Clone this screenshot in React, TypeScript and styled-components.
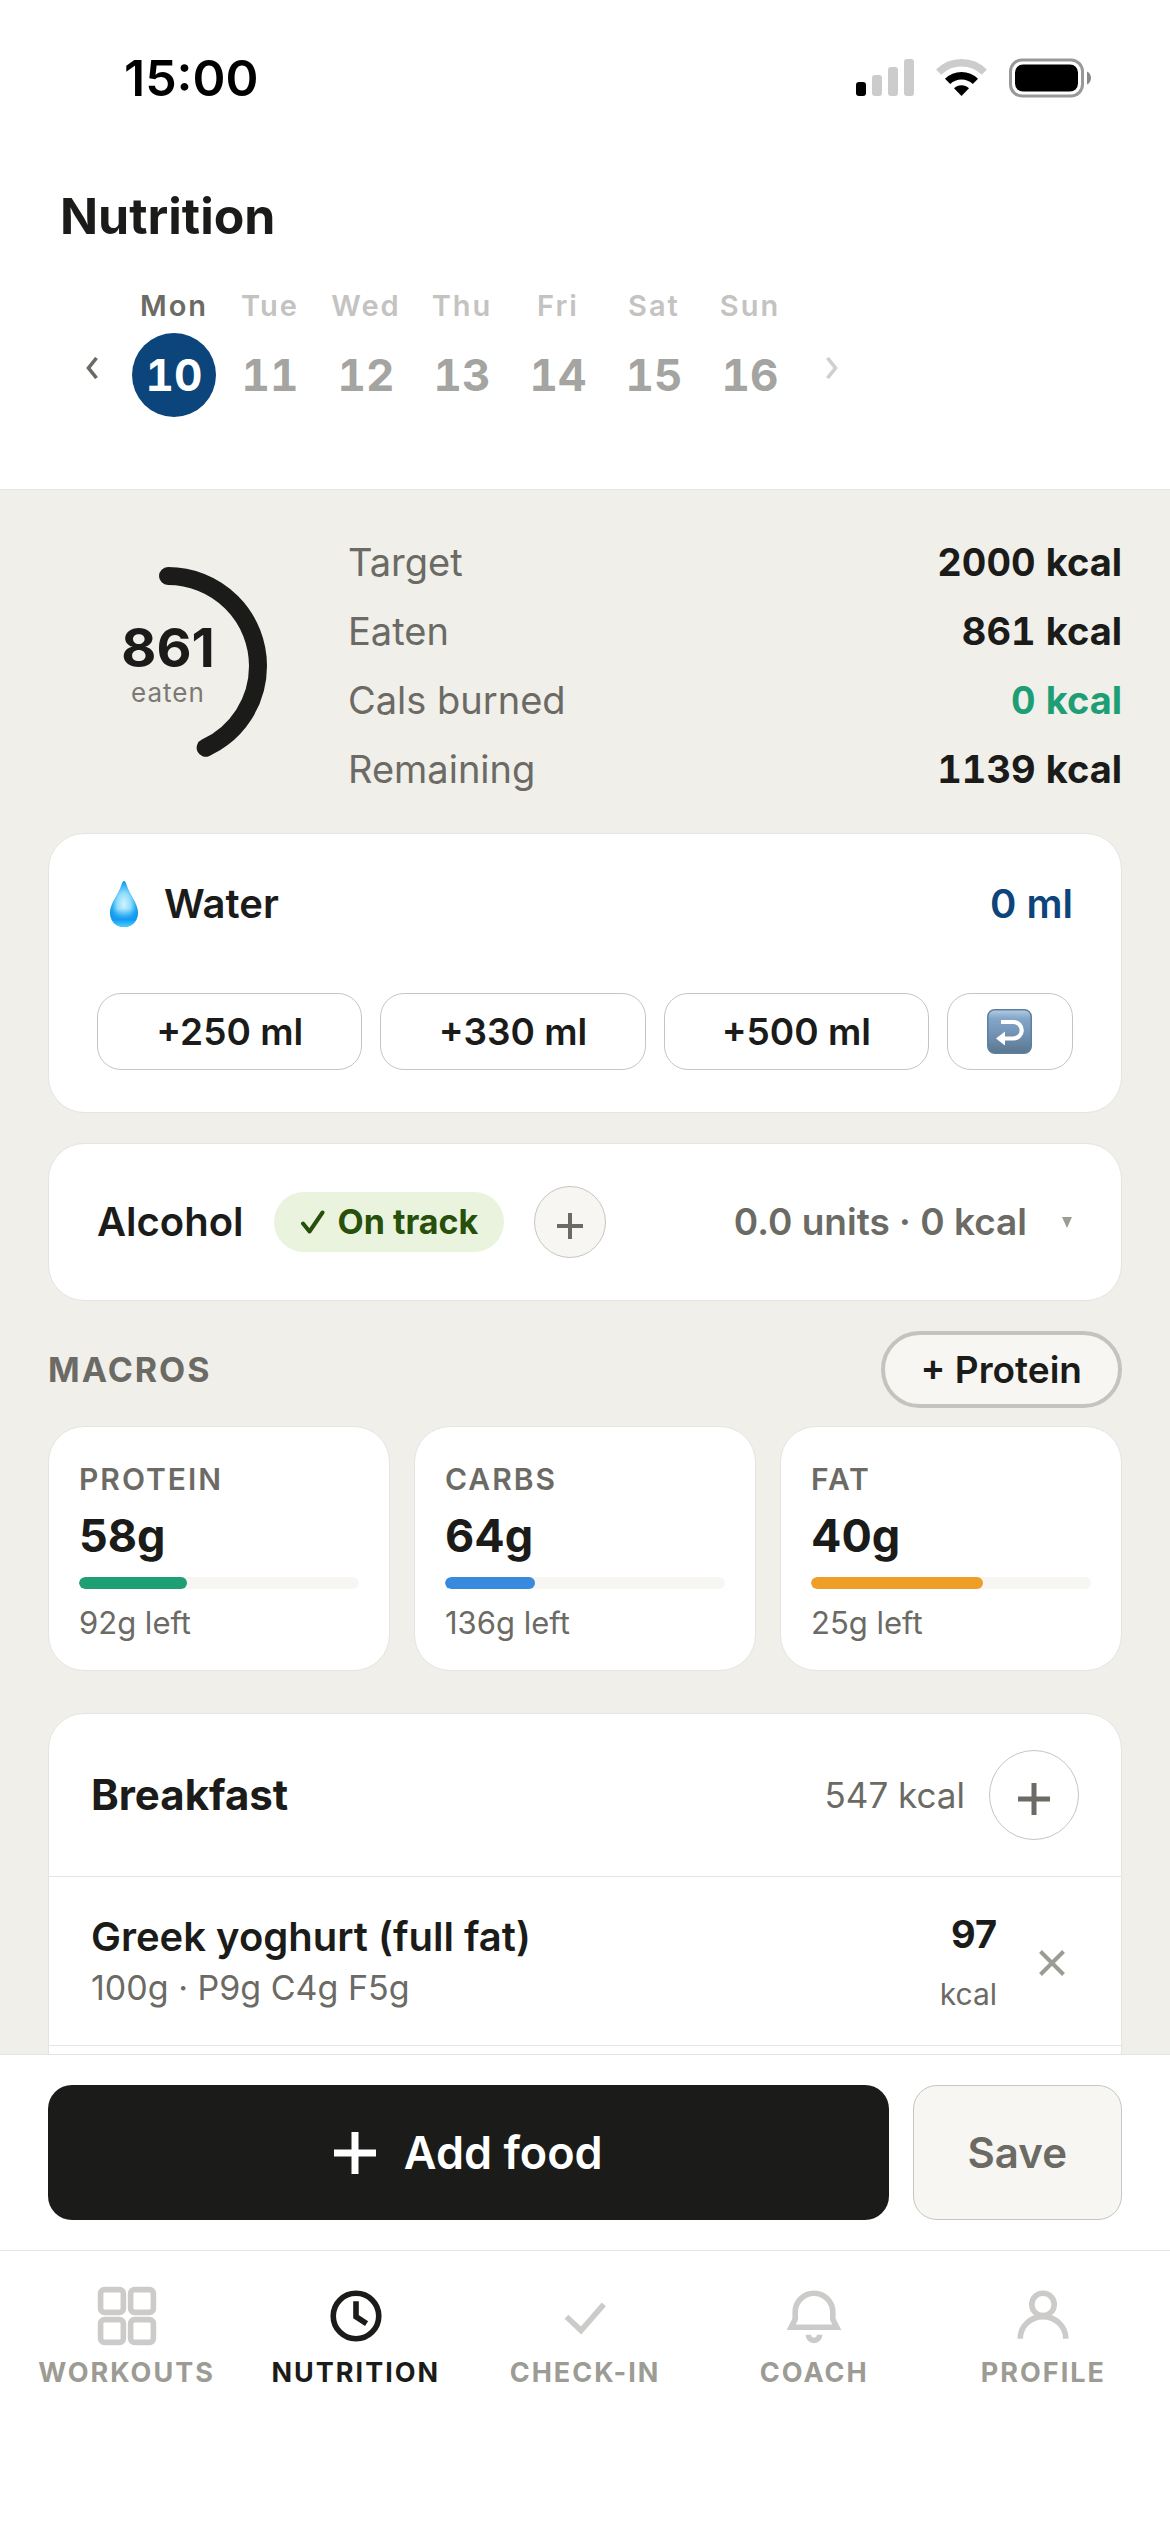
import React from "react";
import styled, { createGlobalStyle } from "styled-components";

const ink = "#1b1b19";
const muted = "#6b6a64";
const faint = "#9c9b94";
const line = "#e4e4e2";
const edge = "#c6c5c2";
const soft = "#f7f6f2";
const navy = "#0c447c";
const green = "#1d9e75";

const GlobalStyle = createGlobalStyle`
  *, *::before, *::after { box-sizing: border-box; }
  body { margin: 0; background: #fff; }
  body, button { font-family: Inter, "Liberation Sans", sans-serif; color: ${ink}; }
  button { margin: 0; padding: 0; border: 0; background: none; cursor: pointer; }
  h1, h2, dl, dd, dt, p, ul { margin: 0; padding: 0; }
  svg { display: block; flex: none; }
`;

const Screen = styled.div`
  display: flex;
  flex-direction: column;
  height: 100vh;
`;

const StatusBar = styled.div`
  display: flex;
  align-items: center;
  justify-content: space-between;
  height: 156px;
  padding: 0 78px 0 124px;
  flex: none;
`;

const Clock = styled.span`
  font-size: 50px;
  line-height: 60px;
  font-weight: 600;
  color: #000;
`;

const StatusIcons = styled.div`
  display: flex;
  align-items: center;
  gap: 22px;
`;

const Header = styled.header`
  flex: none;
  padding: 30px 60px 72px;
  border-bottom: 1px solid ${line};
`;

const Title = styled.h1`
  font-size: 50px;
  line-height: 60px;
  font-weight: 700;
`;

const Week = styled.div`
  display: flex;
  align-items: center;
  gap: 12px;
  margin: 42px 0 0 4px;
`;

const WeekArrow = styled.button<{ $dim?: boolean }>`
  display: flex;
  justify-content: center;
  width: 56px;
  padding-top: 30px;
  color: ${(p) => (p.$dim ? "#cfcfcd" : muted)};
`;

const Day = styled.button<{ $active?: boolean }>`
  display: flex;
  flex-direction: column;
  align-items: center;
  gap: 9px;
  width: 84px;
  font-size: 29px;
  line-height: 36px;
  font-weight: 600;
  letter-spacing: 2px;
  color: ${(p) => (p.$active ? muted : "#c4c3c1")};
`;

const DayNumber = styled.span<{ $active?: boolean }>`
  display: flex;
  align-items: center;
  justify-content: center;
  width: 84px;
  height: 84px;
  border-radius: 50%;
  font-size: 44px;
  font-weight: 700;
  font-variant-numeric: tabular-nums;
  letter-spacing: 0;
  background: ${(p) => (p.$active ? navy : "transparent")};
  color: ${(p) => (p.$active ? "#fff" : "#a4a4a2")};
`;

const Main = styled.main`
  flex: 1;
  min-height: 0;
  overflow-y: auto;
  scrollbar-width: none;
  padding: 48px 48px 0;
  background: #f0efea;
`;

const Summary = styled.section`
  display: flex;
  align-items: center;
  gap: 60px;
  margin-bottom: 40px;
`;

const Ring = styled.div`
  display: grid;
  place-items: center;
  width: 240px;
  flex: none;
  > * { grid-area: 1 / 1; }
`;

const RingText = styled.div`
  display: flex;
  flex-direction: column;
  align-items: center;
`;

const RingValue = styled.strong`
  font-size: 54px;
  line-height: 54px;
  font-weight: 700;
`;

const RingLabel = styled.span`
  font-size: 26px;
  line-height: 36px;
  letter-spacing: 1px;
  color: #7a7973;
`;

const Stats = styled.dl`
  display: flex;
  flex-direction: column;
  flex: 1;
  gap: 21px;
`;

const Stat = styled.div`
  display: flex;
  justify-content: space-between;
  font-size: 38px;
  line-height: 48px;
`;

const StatName = styled.dt`
  color: ${muted};
`;

const StatValue = styled.dd<{ $color?: string }>`
  font-weight: 700;
  font-variant-numeric: tabular-nums;
  color: ${(p) => p.$color ?? ink};
`;

const Card = styled.section`
  background: #fff;
  border: 1px solid ${line};
  border-radius: 36px;
`;

const WaterCard = styled(Card)`
  padding: 42px 48px;
  margin-bottom: 30px;
`;

const WaterHead = styled.div`
  display: flex;
  align-items: center;
  justify-content: space-between;
  height: 56px;
  margin-bottom: 61px;
`;

const CardTitle = styled.h2`
  display: flex;
  align-items: center;
  gap: 10px;
  font-size: 40px;
  line-height: 48px;
  font-weight: 600;
`;

const WaterTotal = styled.span`
  font-size: 40px;
  line-height: 48px;
  font-weight: 600;
  color: ${navy};
`;

const WaterButtons = styled.div`
  display: flex;
  gap: 18px;
`;

const WaterButton = styled.button<{ $compact?: boolean }>`
  display: flex;
  align-items: center;
  justify-content: center;
  flex: ${(p) => (p.$compact ? "0 0 126px" : "1")};
  height: 77px;
  border: 1px solid ${edge};
  border-radius: 24px;
  font-size: 37px;
  line-height: 48px;
  font-weight: 600;
`;

const AlcoholCard = styled(Card)`
  display: flex;
  align-items: center;
  padding: 42px 48px;
  margin-bottom: 30px;
`;

const Pill = styled.span`
  display: flex;
  align-items: center;
  gap: 12px;
  height: 60px;
  margin: 0 30px;
  padding: 0 26px;
  border-radius: 30px;
  background: #eaf3de;
  color: #27500a;
  font-size: 34px;
  line-height: 42px;
  font-weight: 700;
`;

const RoundButton = styled.button<{ $size: number; $fill: string }>`
  display: flex;
  align-items: center;
  justify-content: center;
  width: ${(p) => p.$size}px;
  height: ${(p) => p.$size}px;
  padding-top: 8px;
  flex: none;
  border: 1px solid ${edge};
  border-radius: 50%;
  background: ${(p) => p.$fill};
  color: ${muted};
`;

const Units = styled.button`
  display: flex;
  align-items: center;
  gap: 34px;
  margin-left: auto;
  font-size: 37px;
  line-height: 48px;
  font-weight: 600;
  color: ${muted};
`;

const MacroHead = styled.div`
  display: flex;
  align-items: center;
  justify-content: space-between;
  margin-bottom: 18px;
`;

const Eyebrow = styled.h2`
  font-size: 34px;
  line-height: 42px;
  font-weight: 700;
  letter-spacing: 2px;
  color: ${muted};
`;

const ProteinButton = styled.button`
  height: 77px;
  padding: 0 36px;
  border: 4px solid #c4c3c0;
  border-radius: 39px;
  background: ${soft};
  font-size: 37px;
  line-height: 48px;
  font-weight: 600;
`;

const Macros = styled.div`
  display: grid;
  grid-template-columns: repeat(3, 1fr);
  gap: 24px;
  margin-bottom: 42px;
`;

const MacroCard = styled(Card)`
  padding: 34px 30px 29px;
`;

const MacroName = styled.p`
  font-size: 30px;
  line-height: 36px;
  font-weight: 600;
  letter-spacing: 2px;
  color: ${muted};
`;

const MacroValue = styled.p`
  margin: 12px 0 14px;
  font-size: 45px;
  line-height: 54px;
  font-weight: 700;
`;

const Track = styled.div`
  height: 12px;
  border-radius: 6px;
  background: ${soft};
  overflow: hidden;
`;

const Fill = styled.div`
  height: 100%;
  border-radius: 6px;
`;

const MacroLeft = styled.p`
  margin-top: 16px;
  font-size: 31px;
  line-height: 36px;
  color: ${muted};
`;

const Meal = styled(Card)`
  padding-bottom: 42px;
`;

const MealHead = styled.div`
  display: flex;
  align-items: center;
  gap: 24px;
  padding: 36px 42px;
  border-bottom: 1px solid ${line};
`;

const MealTitle = styled.h2`
  flex: 1;
  font-size: 42px;
  line-height: 48px;
  font-weight: 700;
`;

const MealTotal = styled.span`
  font-size: 35px;
  line-height: 48px;
  color: ${muted};
`;

const FoodList = styled.ul`
  list-style: none;
`;

const Food = styled.li`
  display: flex;
  align-items: center;
  gap: 28px;
  padding: 33px 42px;
  border-bottom: 1px solid ${line};
`;

const FoodInfo = styled.div`
  flex: 1;
`;

const FoodName = styled.p`
  font-size: 40px;
  line-height: 48px;
  font-weight: 600;
`;

const FoodDetail = styled.p`
  margin-top: 6px;
  font-size: 34px;
  line-height: 42px;
  color: ${muted};
`;

const FoodEnergy = styled.div`
  display: flex;
  flex-direction: column;
  align-items: flex-end;
  gap: 18px;
`;

const EnergyValue = styled.strong`
  font-size: 38px;
  line-height: 48px;
  font-weight: 700;
`;

const EnergyUnit = styled.span`
  font-size: 30px;
  line-height: 36px;
  color: ${muted};
`;

const RemoveButton = styled.button`
  display: flex;
  justify-content: center;
  width: 54px;
  padding-top: 4px;
  color: ${faint};
`;

const Actions = styled.div`
  display: flex;
  gap: 24px;
  flex: none;
  padding: 30px 48px;
  border-top: 1px solid ${line};
`;

const AddButton = styled.button`
  display: flex;
  align-items: center;
  justify-content: center;
  gap: 28px;
  flex: 1;
  height: 135px;
  border-radius: 24px;
  background: ${ink};
  color: #fff;
  font-size: 45px;
  line-height: 54px;
  font-weight: 600;
`;

const SaveButton = styled.button`
  height: 135px;
  padding: 0 54px;
  border: 1px solid ${edge};
  border-radius: 24px;
  background: ${soft};
  color: ${muted};
  font-size: 42px;
  line-height: 54px;
  font-weight: 600;
`;

const Tabs = styled.nav`
  display: flex;
  flex: none;
  padding: 32px 12px 144px;
  border-top: 1px solid ${line};
`;

const Tab = styled.a<{ $active?: boolean }>`
  display: flex;
  flex-direction: column;
  align-items: center;
  gap: 9px;
  flex: 1 1 0;
  font-size: 27px;
  line-height: 30px;
  font-weight: 700;
  letter-spacing: 2px;
  text-decoration: none;
  color: ${(p) => (p.$active ? ink : faint)};
  svg { color: ${(p) => (p.$active ? ink : "#cccbc9")}; }
`;

const Plus = ({ size, weight }: { size: number; weight: number }) => (
  <svg width={size} height={size} viewBox={`0 0 ${size} ${size}`} stroke="currentColor" strokeWidth={weight} aria-hidden="true">
    <path d={`M${size / 2} 0V${size}M0 ${size / 2}H${size}`} />
  </svg>
);

const Chevron = ({ d }: { d: string }) => (
  <svg width="14" height="22" viewBox="0 0 14 22" fill="none" stroke="currentColor" strokeWidth="3.6" aria-hidden="true">
    <path d={d} />
  </svg>
);

const TabIcon = ({ children }: { children: React.ReactNode }) => (
  <svg width="66" height="66" viewBox="0 0 20 20" fill="none" stroke="currentColor" strokeWidth="1.7" aria-hidden="true">
    {children}
  </svg>
);

const Signal = () => (
  <svg width="58" height="38" viewBox="0 0 58 38" aria-label="Signal" role="img">
    <rect x="0" y="23" width="10" height="14" rx="3" fill="#000" />
    <rect x="16" y="16" width="10" height="21" rx="3" fill="#ccc" />
    <rect x="32" y="8" width="10" height="29" rx="3" fill="#ccc" />
    <rect x="48" y="0" width="10" height="37" rx="3" fill="#ccc" />
  </svg>
);

const Wifi = () => (
  <svg width="51" height="38" viewBox="0 0 51 38" fill="none" aria-label="Wi-Fi" role="img">
    <path d="M2.7 13.2a32.4 32.4 0 0 1 45.6 0" stroke="#ccc" strokeWidth="7.4" />
    <path d="M11.6 22.4a19.8 19.8 0 0 1 27.8 0" stroke="#000" strokeWidth="7.4" />
    <path d="M18 29.3a10.6 10.6 0 0 1 15 0L25.5 37z" fill="#000" />
  </svg>
);

const Battery = () => (
  <svg width="83" height="40" viewBox="0 0 83 40" aria-label="Battery" role="img">
    <rect x="1.5" y="2" width="72" height="36" rx="11.5" fill="none" stroke="#999" strokeWidth="3" />
    <rect x="6" y="6.5" width="63" height="27" rx="8" fill="#000" />
    <path d="M78 13.5c2.500 1 4 3.600 4 6.500s-1.500 5.500-4 6.500z" fill="#888" />
  </svg>
);

const Drop = () => (
  <svg width="57" height="48" viewBox="0 0 57 48" aria-hidden="true">
    <defs>
      <radialGradient id="drop" cx="0.5" cy="0.5" r="0.55">
        <stop offset="0" stopColor="#d2f4ff" />
        <stop offset="0.45" stopColor="#8fdcfb" />
        <stop offset="0.8" stopColor="#1ea6f0" />
        <stop offset="1" stopColor="#1592e0" />
      </radialGradient>
      <linearGradient id="dropBase" x1="0" y1="0" x2="0" y2="1">
        <stop offset="0.6" stopColor="#119bf2" stopOpacity="0" />
        <stop offset="0.84" stopColor="#119bf2" />
        <stop offset="1" stopColor="#4fd0fb" />
      </linearGradient>
    </defs>
    <path d="M27 1c1.500 0 2 2 3 5 2.500 8 11 17.500 11 26.500C41 41 35 47 27 47s-14-6-14-14.500C13 23.500 21.500 14 24 6c1-3 1.500-5 3-5z" fill="url(#drop)" />
    <path d="M27 1c1.500 0 2 2 3 5 2.500 8 11 17.500 11 26.500C41 41 35 47 27 47s-14-6-14-14.500C13 23.500 21.500 14 24 6c1-3 1.500-5 3-5z" fill="url(#dropBase)" />
  </svg>
);

const Undo = () => (
  <svg width="45" height="45" viewBox="0 0 45 45" aria-hidden="true">
    <defs>
      <linearGradient id="undo" x1="0" y1="0" x2="0" y2="1">
        <stop offset="0" stopColor="#b4cde3" />
        <stop offset="0.2" stopColor="#84a6c9" />
        <stop offset="0.5" stopColor="#7596b8" />
        <stop offset="1" stopColor="#5a7790" />
      </linearGradient>
    </defs>
    <rect x="0.75" y="0.75" width="43.5" height="43.5" rx="7" fill="url(#undo)" stroke="#5f7f9e" strokeWidth="1.5" />
    <path d="M14 13h12.500a8 8 0 0 1 0 16.500H17" fill="none" stroke="#fff" strokeWidth="4.2" />
    <path d="M9 29.500l9-7v14z" fill="#fff" />
  </svg>
);

const days = [
  ["Mon", 10],
  ["Tue", 11],
  ["Wed", 12],
  ["Thu", 13],
  ["Fri", 14],
  ["Sat", 15],
  ["Sun", 16],
] as const;

const stats = [
  { name: "Target", value: "2000 kcal" },
  { name: "Eaten", value: "861 kcal" },
  { name: "Cals burned", value: "0 kcal", color: green },
  { name: "Remaining", value: "1139 kcal" },
];

const macros = [
  { name: "PROTEIN", eaten: 58, goal: 150, color: green },
  { name: "CARBS", eaten: 64, goal: 200, color: "#378add" },
  { name: "FAT", eaten: 40, goal: 65, color: "#ef9f27" },
];

const tabs = [
  {
    name: "WORKOUTS",
    icon: (
      <>
        <rect x="2" y="2" width="6.9" height="6.9" rx="1.2" />
        <rect x="11.1" y="2" width="6.9" height="6.9" rx="1.2" />
        <rect x="2" y="11.1" width="6.9" height="6.9" rx="1.2" />
        <rect x="11.1" y="11.1" width="6.9" height="6.9" rx="1.2" />
      </>
    ),
  },
  {
    name: "NUTRITION",
    active: true,
    icon: (
      <>
        <circle cx="10" cy="10" r="6.9" />
        <path d="M10 5.500v4.700l3.200 2.100" />
      </>
    ),
  },
  { name: "CHECK-IN", icon: <path d="M4.400 10.200l4.400 4.200 6.900-7.900" /> },
  {
    name: "COACH",
    icon: (
      <>
        <path d="M10 3.100a5.700 5.700 0 0 0-5.700 5.700V11L3.100 13.400h13.800L15.700 11V8.800A5.700 5.700 0 0 0 10 3.100z" />
        <path d="M8.300 15.700a1.700 1.700 0 0 0 3.400 0" />
      </>
    ),
  },
  {
    name: "PROFILE",
    icon: (
      <>
        <circle cx="10" cy="6.5" r="3.4" />
        <path d="M3.100 16.900c0-3.800 3.100-6.700 6.900-6.700s6.900 2.900 6.900 6.700" />
      </>
    ),
  },
];

const ringLength = 2 * Math.PI * 90;

export default function App() {
  return (
    <Screen>
      <GlobalStyle />
      <StatusBar>
        <Clock>15:00</Clock>
        <StatusIcons>
          <Signal />
          <Wifi />
          <Battery />
        </StatusIcons>
      </StatusBar>

      <Header>
        <Title>Nutrition</Title>
        <Week>
          <WeekArrow aria-label="Previous week">
            <Chevron d="M11.500 1L3.500 11l8 10" />
          </WeekArrow>
          {days.map(([name, number]) => (
            <Day key={name} $active={number === 10}>
              {name}
              <DayNumber $active={number === 10}>{number}</DayNumber>
            </Day>
          ))}
          <WeekArrow $dim aria-label="Next week">
            <Chevron d="M2.500 1l8 10-8 10" />
          </WeekArrow>
        </Week>
      </Header>

      <Main>
        <Summary>
          <Ring>
            <svg width="240" height="240" viewBox="0 0 240 240" fill="none" aria-hidden="true">
              <circle
                cx="120"
                cy="120"
                r="90"
                stroke={ink}
                strokeWidth="18"
                strokeLinecap="round"
                strokeDasharray={`${(ringLength * 861) / 2000} ${ringLength}`}
                transform="rotate(-90 120 120)"
              />
            </svg>
            <RingText>
              <RingValue>861</RingValue>
              <RingLabel>eaten</RingLabel>
            </RingText>
          </Ring>
          <Stats>
            {stats.map((s) => (
              <Stat key={s.name}>
                <StatName>{s.name}</StatName>
                <StatValue $color={s.color}>{s.value}</StatValue>
              </Stat>
            ))}
          </Stats>
        </Summary>

        <WaterCard>
          <WaterHead>
            <CardTitle>
              <Drop />
              Water
            </CardTitle>
            <WaterTotal>0 ml</WaterTotal>
          </WaterHead>
          <WaterButtons>
            <WaterButton>+250 ml</WaterButton>
            <WaterButton>+330 ml</WaterButton>
            <WaterButton>+500 ml</WaterButton>
            <WaterButton $compact aria-label="Undo">
              <Undo />
            </WaterButton>
          </WaterButtons>
        </WaterCard>

        <AlcoholCard>
          <CardTitle>Alcohol</CardTitle>
          <Pill>
            <svg width="26" height="24" viewBox="0 0 26 24" fill="none" stroke="currentColor" strokeWidth="4" strokeLinecap="round" strokeLinejoin="round" aria-hidden="true">
              <path d="M3 13.500l6.500 8L22.500 2.500" />
            </svg>
            On track
          </Pill>
          <RoundButton $size={72} $fill={soft} aria-label="Add drink">
            <Plus size={26} weight={4} />
          </RoundButton>
          <Units aria-label="Show alcohol details">
            0.0 units · 0 kcal
            <svg width="12" height="12" viewBox="0 0 12 12" fill={faint} aria-hidden="true">
              <path d="M1 1h10L6 12z" />
            </svg>
          </Units>
        </AlcoholCard>

        <MacroHead>
          <Eyebrow>MACROS</Eyebrow>
          <ProteinButton>+ Protein</ProteinButton>
        </MacroHead>
        <Macros>
          {macros.map((m) => (
            <MacroCard key={m.name}>
              <MacroName>{m.name}</MacroName>
              <MacroValue>{m.eaten}g</MacroValue>
              <Track>
                <Fill style={{ width: `${(m.eaten / m.goal) * 100}%`, background: m.color }} />
              </Track>
              <MacroLeft>{m.goal - m.eaten}g left</MacroLeft>
            </MacroCard>
          ))}
        </Macros>

        <Meal>
          <MealHead>
            <MealTitle>Breakfast</MealTitle>
            <MealTotal>547 kcal</MealTotal>
            <RoundButton $size={90} $fill="#fff" aria-label="Add to breakfast">
              <Plus size={32} weight={5} />
            </RoundButton>
          </MealHead>
          <FoodList>
            <Food>
              <FoodInfo>
                <FoodName>Greek yoghurt (full fat)</FoodName>
                <FoodDetail>100g · P9g C4g F5g</FoodDetail>
              </FoodInfo>
              <FoodEnergy>
                <EnergyValue>97</EnergyValue>
                <EnergyUnit>kcal</EnergyUnit>
              </FoodEnergy>
              <RemoveButton aria-label="Remove Greek yoghurt">
                <svg width="26" height="26" viewBox="0 0 26 26" stroke="currentColor" strokeWidth="4" aria-hidden="true">
                  <path d="M1.500 1.500l23 23M24.500 1.500l-23 23" />
                </svg>
              </RemoveButton>
            </Food>
          </FoodList>
        </Meal>
      </Main>

      <Actions>
        <AddButton>
          <Plus size={42} weight={7} />
          Add food
        </AddButton>
        <SaveButton>Save</SaveButton>
      </Actions>

      <Tabs>
        {tabs.map((t) => (
          <Tab key={t.name} href="#" $active={t.active}>
            <TabIcon>{t.icon}</TabIcon>
            {t.name}
          </Tab>
        ))}
      </Tabs>
    </Screen>
  );
}
